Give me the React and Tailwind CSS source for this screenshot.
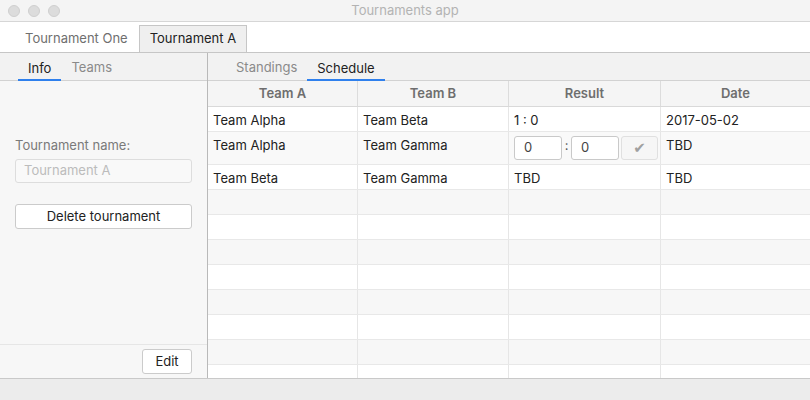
import React from 'react';

const ROWS = [
  { a: 'Team Alpha', b: 'Team Beta', result: '1 : 0', date: '2017-05-02' },
  { a: 'Team Alpha', b: 'Team Gamma', edit: true, date: 'TBD' },
  { a: 'Team Beta', b: 'Team Gamma', result: 'TBD', date: 'TBD' },
];

const EMPTY_ROWS = 8;

function Cell({ children, last }) {
  return (
    <div className={'px-[5px] flex items-start pt-[4px] ' + (last ? '' : 'border-r border-[#e6e6e6]')}>
      {children}
    </div>
  );
}

function ResultEditor() {
  return (
    <div className="flex items-center">
      <div className="w-[48px] h-[24px] border border-[#c9c9c9] rounded-[3px] bg-white pl-[9px] flex items-center text-[#444]">0</div>
      <span className="w-[9px] text-center text-[#555] -mt-[4px]">:</span>
      <div className="w-[48px] h-[24px] border border-[#c9c9c9] rounded-[3px] bg-white pl-[9px] flex items-center text-[#444]">0</div>
      <div className="ml-[2px] w-[37px] h-[24px] border border-[#e0e0e0] rounded-[3px] bg-[#f6f6f6] flex items-center justify-center text-[#a0a0a0] text-[15px]" style={{ fontFamily: '"DejaVu Sans", sans-serif' }}>✔</div>
    </div>
  );
}

export default function App() {
  return (
    <div className="w-[810px] h-[400px] flex flex-col bg-white text-[13px] text-[#222] overflow-hidden" style={{ fontFamily: 'Inter, "Noto Sans", sans-serif' }}>
      {/* title bar */}
      <div className="h-[22px] bg-[#f4f4f4] border-b border-[#d6d6d6] flex items-center relative">
        <div className="flex gap-[8px] pl-[8px]">
          <span className="w-[12px] h-[12px] rounded-full bg-[#dcdcdc] border border-[#cfcfcf]" />
          <span className="w-[12px] h-[12px] rounded-full bg-[#dcdcdc] border border-[#cfcfcf]" />
          <span className="w-[12px] h-[12px] rounded-full bg-[#dcdcdc] border border-[#cfcfcf]" />
        </div>
        <div className="absolute inset-0 flex items-center justify-center text-[#b3b3b3] text-[13px]">Tournaments app</div>
      </div>

      {/* top tabs */}
      <div className="h-[31px] border-b border-[#c6c6c6] flex items-end pl-[14px]">
        <div className="h-[27px] px-[11px] flex items-center text-[#6f6f6f] whitespace-nowrap">Tournament One</div>
        <div className="h-[28px] -mb-px px-[10px] flex items-center bg-[#efefef] border border-[#c6c6c6] text-[#222] whitespace-nowrap">Tournament A</div>
      </div>

      <div className="flex-1 flex min-h-0">
        {/* left panel */}
        <div className="w-[208px] border-r border-[#b9b9b9] bg-[#f7f7f7] flex flex-col">
          <div className="h-[28px] bg-[#f2f2f2] border-b border-[#d2d2d2] flex items-end pl-[18px]">
            <div className="h-full px-[10px] pt-[4px] flex items-center border-b-2 border-[#2f80ed] -mb-px text-[#222]">Info</div>
            <div className="h-full px-[10px] pt-[4px] pb-[2px] flex items-center text-[#8a8a8a]">Teams</div>
          </div>
          <div className="flex-1 px-[15px] pt-[56px]">
            <div className="text-[#7a7a7a] leading-[16px]">Tournament name:</div>
            <div className="mt-[6px] h-[24px] border border-[#dddddd] rounded-[3px] bg-[#f9f9f9] pl-[8px] flex items-center text-[#bcbcbc]">Tournament A</div>
            <div className="mt-[21px] h-[25px] border border-[#cbcbcb] rounded-[3px] bg-white flex items-center justify-center text-[#222]">Delete tournament</div>
          </div>
          <div className="h-[34px] border-t border-[#e6e6e6] flex items-center justify-end pr-[15px]">
            <div className="h-[25px] w-[50px] border border-[#cbcbcb] rounded-[3px] bg-white flex items-center justify-center text-[#222]">Edit</div>
          </div>
        </div>

        {/* right panel */}
        <div className="flex-1 flex flex-col min-w-0">
          <div className="h-[28px] bg-[#f2f2f2] border-b border-[#d2d2d2] flex items-end pl-[18px]">
            <div className="h-full px-[10px] pt-[4px] pb-[2px] flex items-center text-[#8a8a8a]">Standings</div>
            <div className="h-full px-[10px] pt-[4px] flex items-center border-b-2 border-[#2f80ed] -mb-px text-[#222]">Schedule</div>
          </div>
          <div className="grid grid-cols-[150px_151px_152px_1fr] h-[26px] bg-[#f5f5f5] border-b border-[#d9d9d9] font-semibold text-[#6e6e6e]">
            <div className="flex items-center justify-center border-r border-[#dcdcdc]">Team A</div>
            <div className="flex items-center justify-center border-r border-[#dcdcdc]">Team B</div>
            <div className="flex items-center justify-center border-r border-[#dcdcdc]">Result</div>
            <div className="flex items-center justify-center">Date</div>
          </div>
          <div className="flex-1 overflow-hidden">
            {ROWS.map((r, i) => (
              <div
                key={i}
                className={'grid grid-cols-[150px_151px_152px_1fr] border-b border-[#e8e8e8] ' + (r.edit ? 'h-[33px] ' : 'h-[25px] ') + (i % 2 ? 'bg-[#f9f9f9]' : 'bg-white')}
              >
                <Cell>{r.a}</Cell>
                <Cell>{r.b}</Cell>
                <Cell>{r.edit ? <ResultEditor /> : r.result}</Cell>
                <Cell last>{r.date}</Cell>
              </div>
            ))}
            {Array.from({ length: EMPTY_ROWS }).map((_, i) => (
              <div
                key={'e' + i}
                className={'grid grid-cols-[150px_151px_152px_1fr] h-[25px] border-b border-[#e8e8e8] ' + (i % 2 ? 'bg-white' : 'bg-[#f7f7f7]')}
              >
                <Cell />
                <Cell />
                <Cell />
                <Cell last />
              </div>
            ))}
          </div>
        </div>
      </div>

      {/* status bar */}
      <div className="h-[22px] bg-[#ececec] border-t border-[#c9c9c9]" />
    </div>
  );
}
